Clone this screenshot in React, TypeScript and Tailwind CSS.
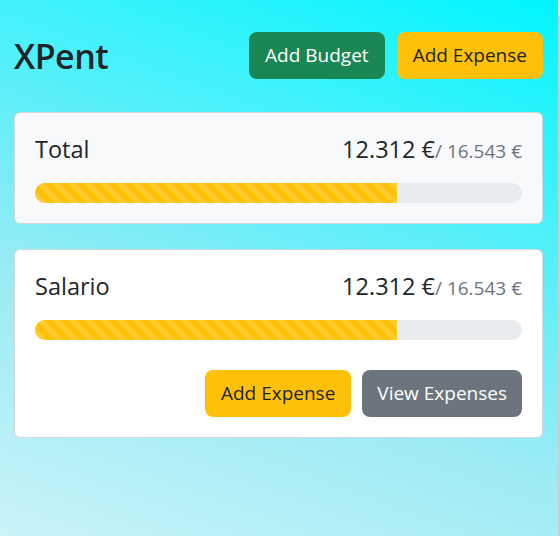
import React from "react";

const stripe =
  "bg-[#ffc107] bg-[linear-gradient(45deg,rgba(255,255,255,.15)_25%,transparent_25%,transparent_50%,rgba(255,255,255,.15)_50%,rgba(255,255,255,.15)_75%,transparent_75%,transparent)] bg-[length:16px_16px]";

function Progress({ value, max }: { value: number; max: number }) {
  const pct = (value / max) * 100;
  return (
    <div className="h-5 w-full rounded-full bg-[#e9ecef] overflow-hidden flex">
      <div className={stripe + " h-full"} style={{ width: pct + "%" }} />
    </div>
  );
}

function Amount() {
  return (
    <div className="flex items-baseline">
      <span className="text-[23.5px] text-[#212529] leading-9">12.312 €</span>
      <span className="text-[19px] text-[#6c757d]">/ 16.543 €</span>
    </div>
  );
}

export default function App() {
  return (
    <div className="flex h-[536px] w-full font-['Open_Sans',sans-serif]">
      <div className="flex-1 bg-[linear-gradient(200deg,#00f6ff_0%,#9cebf5_65%,#c9f4f8_100%)] px-[14px] pr-[15px] pt-8">
        <div className="flex items-center justify-between">
          <h1 className="text-[34px] font-semibold text-[#212529] leading-none tracking-[-0.5px]">XPent</h1>
          <div className="flex gap-3">
            <button className="h-[47px] px-4 rounded-lg bg-[#198754] text-white text-[19px]">
              Add Budget
            </button>
            <button className="h-[47px] px-4 rounded-lg bg-[#ffc107] text-[#212529] text-[19px]">
              Add Expense
            </button>
          </div>
        </div>

        <div className="mt-[33px] rounded-md border border-[#d3d6d8] bg-[#f8f9fa] px-5 pt-[18px] pb-5">
          <div className="flex items-center justify-between mb-4">
            <span className="text-[23.5px] text-[#212529] leading-9">Total</span>
            <Amount />
          </div>
          <Progress value={12312} max={16543} />
        </div>

        <div className="mt-[25px] rounded-md border border-[#d3d6d8] bg-white px-5 pt-[18px] pb-5">
          <div className="flex items-center justify-between mb-4">
            <span className="text-[23.5px] text-[#212529] leading-9">Salario</span>
            <Amount />
          </div>
          <Progress value={12312} max={16543} />
          <div className="mt-[30px] flex justify-end gap-[11px]">
            <button className="h-[47px] px-4 rounded-lg bg-[#ffc107] text-[#212529] text-[19px]">
              Add Expense
            </button>
            <button className="h-[47px] px-[15px] rounded-lg bg-[#6c757d] text-white text-[19px]">
              View Expenses
            </button>
          </div>
        </div>
      </div>
      <div className="w-[2px] flex flex-col">
        <div className="h-4 bg-[#f0f0f0]" />
        <div className="flex-1 bg-[#cdcdcd]" />
      </div>
    </div>
  );
}
